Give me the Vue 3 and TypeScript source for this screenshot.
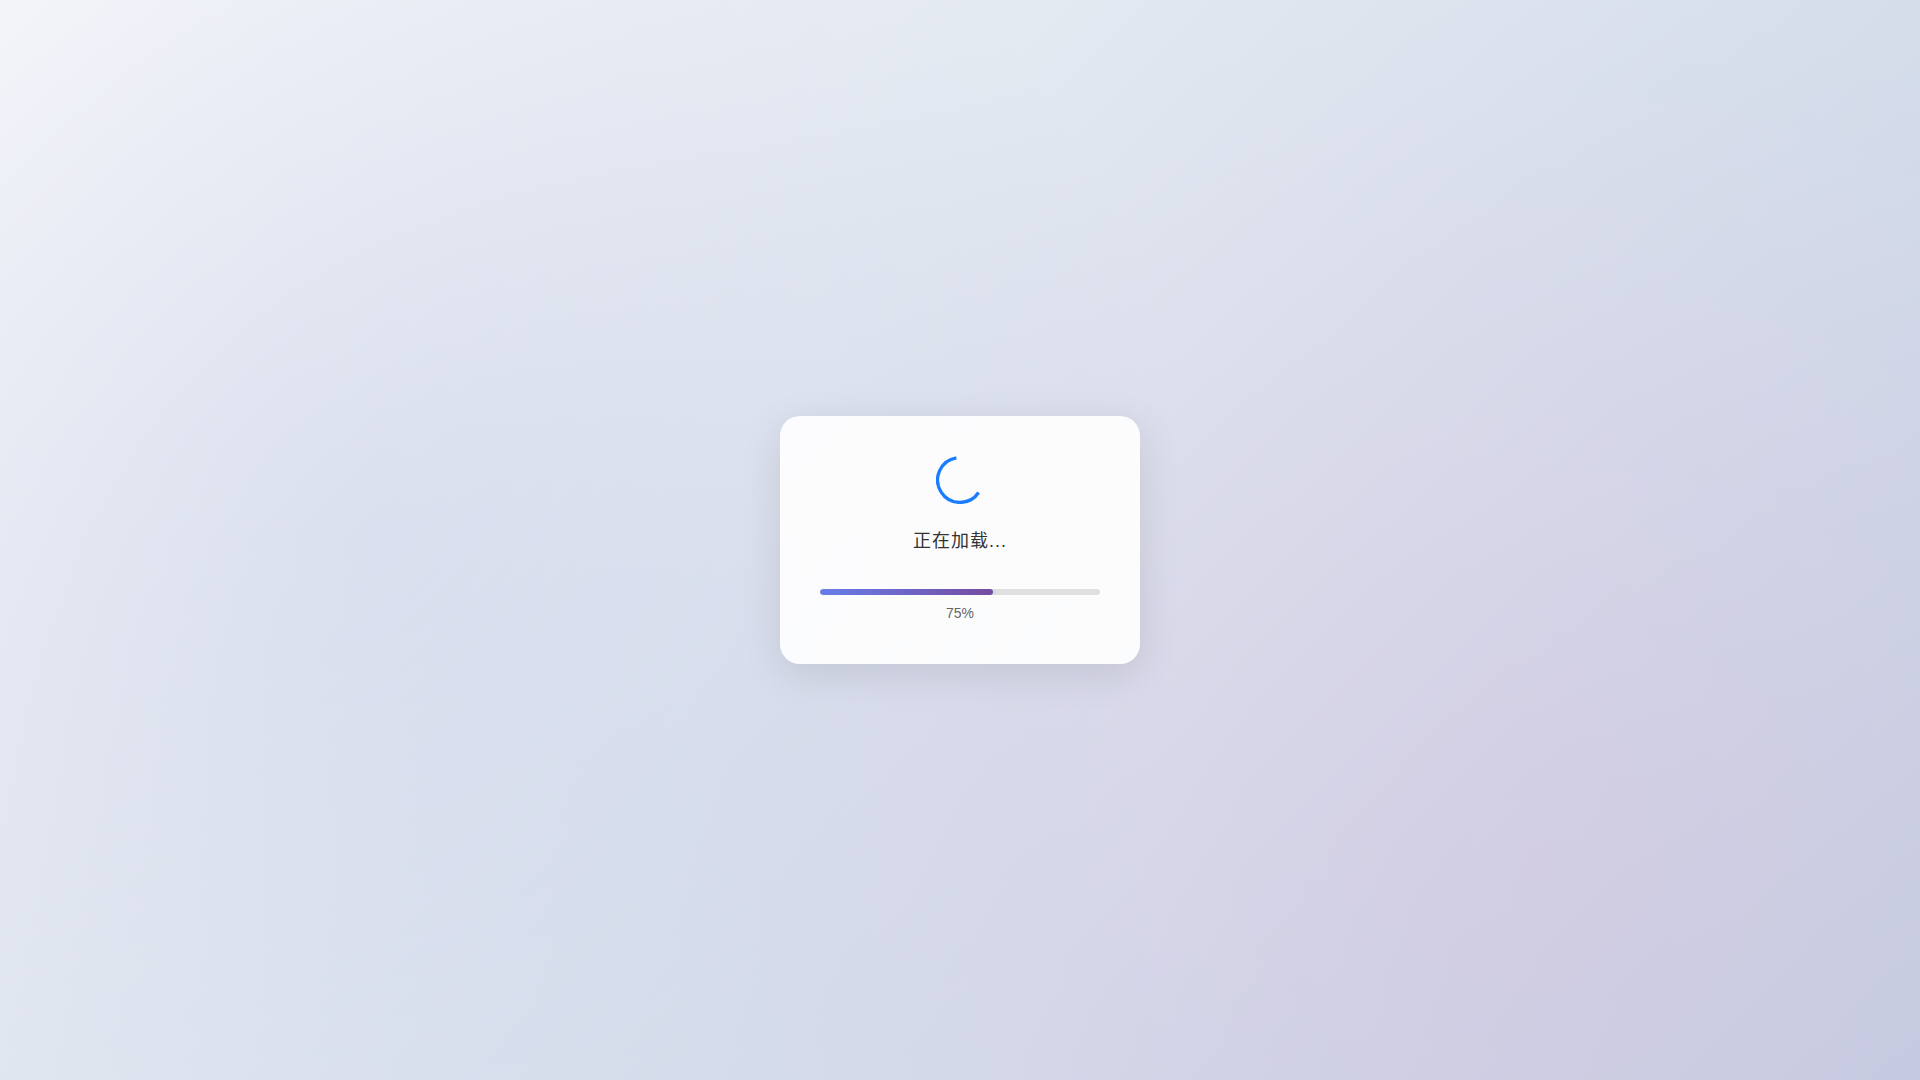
<script setup lang="ts">
import { ref } from 'vue'

const message = ref('正在加载...')
const percent = ref(75)
const filled = ref(61.8)
</script>

<template>
  <main class="loading-page">
    <section class="card" role="status" aria-live="polite">
      <svg class="spinner" viewBox="0 0 48 48" aria-hidden="true">
        <path d="M20.4 1.9A22.4 22.4 0 1 0 42.6 36.5" />
      </svg>
      <p id="loading-message" class="message">{{ message }}</p>
      <div
        class="track"
        role="progressbar"
        aria-labelledby="loading-message"
        :aria-valuenow="percent"
        aria-valuemin="0"
        aria-valuemax="100"
      >
        <div class="fill" :style="{ width: filled + '%' }"></div>
      </div>
      <p class="percent">{{ percent }}%</p>
    </section>
  </main>
</template>

<style>
body {
  margin: 0;
}
</style>

<style scoped>
.loading-page {
  display: flex;
  align-items: center;
  justify-content: center;
  min-height: 100vh;
  font-family: "Liberation Sans", "Noto Sans CJK SC", sans-serif;
  background:
    radial-gradient(circle at 20% 50%, rgba(120, 119, 198, 0.1) 0%, transparent 50%),
    radial-gradient(circle at 80% 80%, rgba(255, 119, 198, 0.1) 0%, transparent 50%),
    linear-gradient(135deg, #f5f7fa 0%, #c3cfe2 100%);
}

.card {
  display: flex;
  flex-direction: column;
  align-items: center;
  box-sizing: border-box;
  width: 360px;
  padding: 40px;
  border-radius: 20px;
  background: rgba(255, 255, 255, 0.9);
  box-shadow: 0 10px 40px rgba(0, 0, 0, 0.1);
}

.spinner {
  width: 48px;
  height: 48px;
  fill: none;
  stroke: #1a7cff;
  stroke-width: 3.3;
}

.message {
  margin: 24px 0 34px;
  color: #333;
  font-size: 18px;
  line-height: 27px;
  letter-spacing: 1px;
}

.track {
  width: 100%;
  height: 6px;
  overflow: hidden;
  border-radius: 3px;
  background: #e0e0e0;
}

.fill {
  height: 100%;
  border-radius: 3px;
  background: linear-gradient(90deg, #667eea 0%, #764ba2 100%);
  box-shadow: 0 0 10px rgba(102, 126, 234, 0.3);
}

.percent {
  margin: 8px 0 0;
  color: #666;
  font-size: 14px;
  line-height: 21px;
}
</style>
